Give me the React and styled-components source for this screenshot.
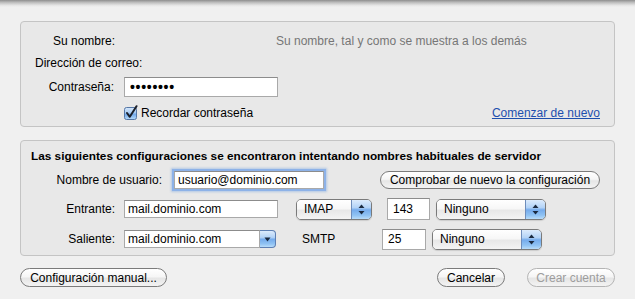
import React from 'react'
import styled, { createGlobalStyle } from 'styled-components'

const GlobalStyle = createGlobalStyle`
  html, body { margin: 0; padding: 0; }
  body {
    background: #f0f0f0;
    font-family: "Liberation Sans", Arial, sans-serif;
    font-size: 12px;
    color: #000;
  }
`

const Sheet = styled.div`
  width: 635px;
  height: 299px;
  background: #f0f0f0;
  overflow: hidden;
`

const Shade = styled.div`
  height: 7px;
  background: linear-gradient(#8e8e8e, #bdbdbd 35%, #e4e4e4 75%, #f0f0f0);
`

const Panel = styled.section`
  box-sizing: border-box;
  margin: ${p => p.$mt}px 20px 0 20px;
  height: ${p => p.$h}px;
  border: 1px solid #c4c4c4;
  border-radius: 4px;
  background: #e8e8e8;
  padding-top: ${p => p.$pt}px;
  display: flex;
  flex-direction: column;
`

const Row = styled.div`
  display: flex;
  align-items: center;
  height: ${p => p.$h || 24}px;
  margin-top: ${p => p.$mt || 0}px;
  padding-left: ${p => p.$pl || 0}px;
  padding-right: ${p => p.$pr || 0}px;
  flex-shrink: 0;
`

const Label = styled.span`
  width: ${p => (p.$w ? `${p.$w}px` : 'auto')};
  text-align: ${p => (p.$w ? 'right' : 'left')};
  white-space: nowrap;
  flex-shrink: 0;
`

const Hint = styled.span`
  margin-left: ${p => p.$ml}px;
  color: #767676;
  white-space: nowrap;
`

const Title = styled.h2`
  margin: 0;
  font-size: 11.8px;
  font-weight: bold;
  white-space: nowrap;
`

const Field = styled.input`
  box-sizing: border-box;
  width: ${p => p.$w}px;
  height: ${p => p.$h || 18}px;
  margin: 0 0 0 ${p => p.$ml || 0}px;
  padding: 0 0 0 ${p => p.$pl || 3}px;
  border: 1px solid #a9a9a9;
  border-top-color: #8c8c8c;
  background: #fff;
  font: 12px "Liberation Sans", Arial, sans-serif;
  color: #000;
  outline: none;
  flex-shrink: 0;
  ${p => p.$focus && `
    box-shadow: 0 0 0 2px #8db2e8, 0 0 2px 3px rgba(110, 160, 225, 0.45);
  `}
  ${p => p.$secret && `
    font-size: 14px;
    font-weight: bold;
    letter-spacing: 0.7px;
    padding-left: 5px;
  `}
`

const Check = styled.span`
  display: inline-flex;
  width: 15px;
  height: 15px;
  margin-left: ${p => p.$ml}px;
  margin-right: 2px;
`

const Link = styled.a`
  margin-left: auto;
  color: #1d4fae;
  text-decoration: underline;
  cursor: pointer;
`

const Button = styled.button`
  box-sizing: border-box;
  width: ${p => p.$w}px;
  height: ${p => p.$h || 19}px;
  margin-left: ${p => (p.$auto ? 'auto' : `${p.$ml || 0}px`)};
  padding: 0;
  border: 1px solid ${p => (p.disabled ? '#b4b4b4' : '#7b7b7b')};
  border-radius: 10px;
  background: linear-gradient(#ffffff, #f6f6f6 45%, #e6e6e6 55%, #f3f3f3);
  font: 12px "Liberation Sans", Arial, sans-serif;
  color: ${p => (p.disabled ? '#9d9d9d' : '#000')};
  flex-shrink: 0;
`

const aqua = 'linear-gradient(#dcebfc 0%, #b3d3f7 40%, #75abec 52%, #8fc2f3 80%, #b8dcfa 100%)'

const Popup = styled.div`
  box-sizing: border-box;
  display: flex;
  width: ${p => p.$w}px;
  height: 21px;
  margin-left: ${p => p.$ml || 0}px;
  border: 1px solid #7a7a7a;
  border-radius: 5px;
  overflow: hidden;
  box-shadow: 0 1px 1px rgba(0, 0, 0, 0.12);
  flex-shrink: 0;
`

const PopupText = styled.span`
  flex: 1;
  display: flex;
  align-items: center;
  padding-left: 7px;
  background: linear-gradient(#ffffff, #f7f7f7 45%, #e8e8e8 55%, #f4f4f4);
`

const Stepper = styled.span`
  width: 19px;
  display: flex;
  align-items: center;
  justify-content: center;
  border-left: 1px solid #6e8dbb;
  background: ${aqua};
`

const Combo = styled.div`
  display: flex;
  margin-left: ${p => p.$ml}px;
  flex-shrink: 0;
`

const ComboButton = styled.span`
  box-sizing: border-box;
  width: 16px;
  height: 18px;
  display: flex;
  align-items: center;
  justify-content: center;
  border: 1px solid #5d7fb3;
  border-left: none;
  border-radius: 0 4px 4px 0;
  background: ${aqua};
`

const ProtoLabel = styled.span`
  width: ${p => p.$w}px;
  margin-left: ${p => p.$ml}px;
  flex-shrink: 0;
`

const Footer = styled.div`
  display: flex;
  align-items: center;
  margin-top: 12px;
  padding: 0 20px;
`

const Arrows = () => (
  <svg width="7" height="11" viewBox="0 0 7 11">
    <path d="M3.5 0.5 L6.5 4 L0.5 4 Z" fill="#1b2a40" />
    <path d="M3.5 10.5 L6.5 7 L0.5 7 Z" fill="#1b2a40" />
  </svg>
)

const DownArrow = () => (
  <svg width="7" height="5" viewBox="0 0 7 5">
    <path d="M0.5 0.5 L6.5 0.5 L3.5 4.5 Z" fill="#1b2a40" />
  </svg>
)

const CheckIcon = () => (
  <svg width="15" height="15" viewBox="0 0 15 15">
    <defs>
      <linearGradient id="cb" x1="0" y1="0" x2="0" y2="1">
        <stop offset="0" stopColor="#d7e8fb" />
        <stop offset="0.45" stopColor="#a6caf3" />
        <stop offset="0.55" stopColor="#71a8ea" />
        <stop offset="1" stopColor="#b6dbfa" />
      </linearGradient>
    </defs>
    <rect x="0.5" y="2.5" width="12" height="12" rx="2" fill="url(#cb)" stroke="#5677a6" />
    <path d="M3 8 L5.8 11.8 L12.5 1.2" fill="none" stroke="#1a1f2a" strokeWidth="2" strokeLinecap="round" strokeLinejoin="round" />
  </svg>
)

function Select({ w, ml, children }) {
  return (
    <Popup $w={w} $ml={ml}>
      <PopupText>{children}</PopupText>
      <Stepper><Arrows /></Stepper>
    </Popup>
  )
}

export default function App() {
  return (
    <Sheet>
      <GlobalStyle />
      <Shade />

      <Panel $mt={14} $h={106} $pt={8}>
        <Row $h={22}>
          <Label $w={94}>Su nombre:</Label>
          <Hint $ml={161}>Su nombre, tal y como se muestra a los demás</Hint>
        </Row>
        <Row $h={22} $pl={14}>
          <Label>Dirección de correo:</Label>
        </Row>
        <Row $h={26}>
          <Label $w={93}>Contraseña:</Label>
          <Field $w={154} $h={20} $ml={10} $secret readOnly value="••••••••" />
        </Row>
        <Row $h={25} $pr={14}>
          <Check $ml={103}><CheckIcon /></Check>
          <span>Recordar contraseña</span>
          <Link>Comenzar de nuevo</Link>
        </Row>
      </Panel>

      <Panel $mt={13} $h={116} $pt={5}>
        <Row $h={20} $pl={10}>
          <Title>Las siguientes configuraciones se encontraron intentando nombres habituales de servidor</Title>
        </Row>
        <Row $mt={2}>
          <Label $w={141}>Nombre de usuario:</Label>
          <Field $w={150} $ml={12} $focus readOnly value="usuario@dominio.com" />
          <Button $w={220} $h={18} $ml={56}>Comprobar de nuevo la configuración</Button>
        </Row>
        <Row $mt={5}>
          <Label $w={94}>Entrante:</Label>
          <Field $w={154} $ml={9} readOnly value="mail.dominio.com" />
          <Select w={76} ml={18}>IMAP</Select>
          <Field $w={43} $h={22} $ml={15} $pl={5} readOnly value="143" />
          <Select w={110} ml={6}>Ninguno</Select>
        </Row>
        <Row $mt={6}>
          <Label $w={94}>Saliente:</Label>
          <Combo $ml={9}>
            <Field $w={136} readOnly value="mail.dominio.com" />
            <ComboButton><DownArrow /></ComboButton>
          </Combo>
          <ProtoLabel $w={80} $ml={26}>SMTP</ProtoLabel>
          <Field $w={44} $h={21} $pl={5} readOnly value="25" />
          <Select w={110} ml={6}>Ninguno</Select>
        </Row>
      </Panel>

      <Footer>
        <Button $w={147}>Configuración manual...</Button>
        <Button $w={68} $auto>Cancelar</Button>
        <Button $w={88} $ml={22} disabled>Crear cuenta</Button>
      </Footer>
    </Sheet>
  )
}
